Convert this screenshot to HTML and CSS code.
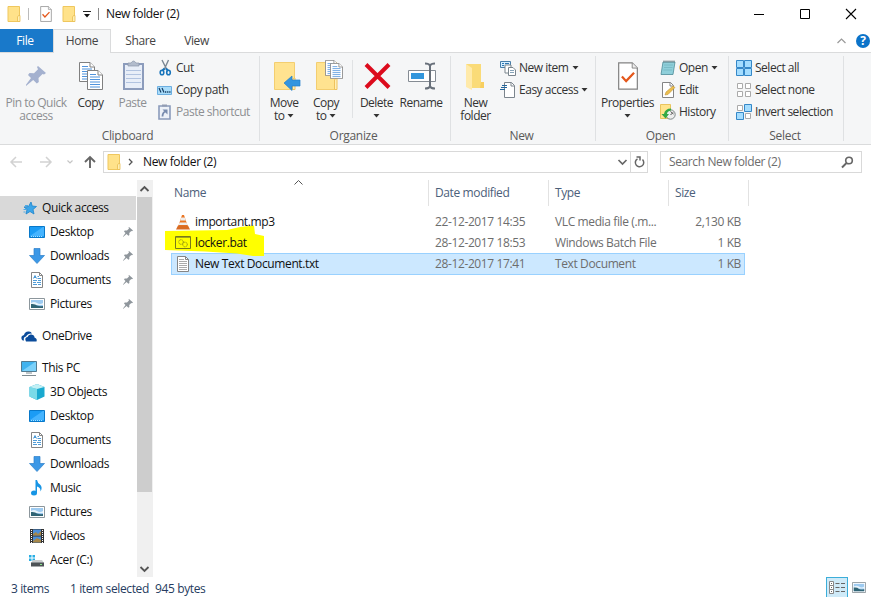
FILE: index.html
```html
<!DOCTYPE html>
<html lang="en">
<head>
  <meta charset="UTF-8">
  <title>New folder (2)</title>
  <link rel="stylesheet" href="styles.css">
</head>
<body>
  <!-- shared icons -->
  <svg class="sprite" width="0" height="0">
    <symbol id="folder" viewBox="0 0 14 16">
      <path d="M1 .5h11.500v15H1z" fill="#ffe28a" stroke="#efc75e"/>
      <path d="M10.500 15.500V11l1-1.500h1.500v6z" fill="#fff0b5" stroke="#e9bd50" stroke-width=".8"/>
    </symbol>
    <symbol id="check-page" viewBox="0 0 22 30">
      <path d="M1 1h14.500l5.500 5.500V29H1z" fill="#fff" stroke="#838383" stroke-width="1.300"/>
      <path d="M15.500 1v5.500H21" fill="#eee" stroke="#838383"/>
      <path d="M4.500 15.500l4.500 5 8.500-9" fill="none" stroke="#e4571b" stroke-width="2.400"/>
    </symbol>
    <symbol id="text-page" viewBox="0 0 16 20">
      <path d="M.5.5h10.500l4.500 4.500v14.500H.5z" fill="#fff" stroke="#808080"/>
      <path d="M11 .5V5h4.500" fill="#fff" stroke="#808080"/>
      <path d="M3 4.500h6M3 7h10M3 9.500h10M3 12h10M3 14.500h10M3 17h10" stroke="#4f93dc"/>
    </symbol>
    <symbol id="pin" viewBox="0 0 20 20">
      <path d="M12 0l8 7-2 1.500-1.500-.5-4 4 .3 4-2 1.500-3.600-3.500L0 20l-.5-.5L5 12 2 9l1.500-2 4.500.2 4-4L11 1z" fill="currentColor"/>
    </symbol>
    <symbol id="desktop" viewBox="0 0 16 12">
      <path d="M.5.5h15v11H.5z" fill="#1b9cf5" stroke="#0878c9"/>
      <path d="M1 10L14 1h1v9z" fill="#45b4ff"/>
      <path d="M2 10.500h12" stroke="#a8e0ff" stroke-dasharray="1 1"/>
    </symbol>
    <symbol id="download" viewBox="0 0 16 16">
      <path d="M5 .5h6v7h4.500L8 15.500.5 7.500H5z" fill="#3c98e6" stroke="#2c7fca" stroke-width=".7"/>
    </symbol>
    <symbol id="document" viewBox="0 0 12 16">
      <path d="M.5.5H8.500l3 3v12H.5z" fill="#fff" stroke="#858585"/>
      <path d="M8.500.5v3h3" fill="none" stroke="#858585"/>
      <path d="M2.500 6.500l1.500-3 1.500 3M3 5.500h2M6.500 4.500H8M6.500 6.500h3.500M2 8.500h4M7 8.500h3M2 10.500h3M6 10.500h4M2 12.500h4M7 12.500h3" fill="none" stroke="#3c91d3" stroke-width=".9"/>
    </symbol>
    <symbol id="picture" viewBox="0 0 16 12">
      <path d="M.5.5h15v11H.5z" fill="#fff" stroke="#8c969c"/>
      <path d="M2 2h12v8H2z" fill="#9dcaf0"/>
      <path d="M2 5q3-2 6 0t6 0v2H2z" fill="#e7f3fb"/>
      <path d="M2 6q4-.5 6 1.500 3 1 6 .5v2H2z" fill="#2f6475"/>
    </symbol>
    <symbol id="caret" viewBox="0 0 6 4"><path d="M0 0h6L3 3.500z" fill="#333"/></symbol>
  </svg>

  <div class="window">
    <div class="titlebar">
      <svg class="quick-folder" width="14" height="16"><use href="#folder"/></svg>
      <span class="bar"></span>
      <svg class="quick-check" width="12" height="16"><use href="#check-page"/></svg>
      <svg class="quick-folder2" width="14" height="16"><use href="#folder"/></svg>
      <svg class="quick-more" width="8" height="7" viewBox="0 0 8 7"><path d="M0 .5h8" stroke="#222"/><path d="M1 3h6L4 6.500z" fill="#111"/></svg>
      <span class="bar bar-dark"></span>
      <span class="window-title">New folder (2)</span>
      <div class="window-buttons">
        <svg width="10" height="10" viewBox="0 0 10 10"><path d="M0 5.500h10" stroke="#000"/></svg>
        <svg width="10" height="10" viewBox="0 0 10 10"><path d="M.5.5h9v9h-9z" fill="none" stroke="#000"/></svg>
        <svg width="10" height="10" viewBox="0 0 10 10"><path d="M0 0l10 10M10 0L0 10" stroke="#000" stroke-width="1.100"/></svg>
      </div>
    </div>

    <div class="tabs">
      <span class="tab tab-file">File</span>
      <span class="tab tab-home">Home</span>
      <span class="tab tab-share">Share</span>
      <span class="tab tab-view">View</span>
      <div class="tab-tools">
        <svg width="9" height="6" viewBox="0 0 9 6"><path d="M.5 5l4-4 4 4" fill="none" stroke="#999" stroke-width="1.200"/></svg>
        <span class="help">?</span>
      </div>
    </div>

    <div class="ribbon">
      <div class="group group-clipboard">
        <div class="tools">
          <div class="big big-pin disabled">
            <svg width="32" height="32" viewBox="0 0 32 32"><use href="#pin" x="6" y="6" width="20" height="20" color="#a4b1cf"/></svg>
            <span>Pin to Quick</span>
            <span>access</span>
          </div>
          <div class="big big-copy">
            <svg width="32" height="32" viewBox="0 0 32 32"><use href="#text-page" x="4" y="2" width="16" height="20"/><use href="#text-page" x="12" y="10" width="16" height="20"/></svg>
            <span>Copy</span>
          </div>
          <div class="big big-paste disabled">
            <svg width="32" height="32" viewBox="0 0 32 32">
              <path d="M7 4h19v25H7z" fill="#e8eef8" stroke="#8c9cbc" stroke-width="2"/>
              <path d="M11 6V3h3q2.500-4 5 0h3v3z" fill="#b2bccc" stroke="#8996a9" stroke-width=".7"/>
              <path d="M9 10.500h15M9 14.500h15M9 18.500h15M9 22.500h15" stroke="#b1c3e0"/>
            </svg>
            <span>Paste</span>
          </div>
          <div class="small-list">
            <div class="small">
              <svg width="16" height="16" viewBox="0 0 16 16"><path d="M5 0l5 10M11.500 0L7 10" stroke="#7a8794" stroke-width="1.400"/><path d="M7.500 8.500l-2 2M9 8.500l2 2" stroke="#1874bb" stroke-width="2"/><ellipse cx="5" cy="12.500" rx="1.800" ry="2.300" fill="none" stroke="#1874bb" stroke-width="1.600"/><ellipse cx="11.500" cy="12.500" rx="1.800" ry="2.300" fill="none" stroke="#1874bb" stroke-width="1.600"/></svg>
              <span>Cut</span>
            </div>
            <div class="small">
              <svg width="16" height="16" viewBox="0 0 16 16"><path d="M.5 4.500h14v8H.5z" fill="#a9dcfa" stroke="#6caee0"/><path d="M2 6l2 4.500M5 6l2 4.500" stroke="#163d63" stroke-width="1.200"/><path d="M8 10h6" stroke="#163d63" stroke-width="1.400" stroke-dasharray="1.300 .8"/></svg>
              <span>Copy path</span>
            </div>
            <div class="small disabled">
              <svg width="16" height="16" viewBox="0 0 16 16"><path d="M2 2h11v13H2z" fill="#edf1f8" stroke="#8b9bbb" stroke-width="1.600"/><path d="M5 .5h5v2H5z" fill="#929db3"/><path d="M5.500 12.500q0-4 3-5" fill="none" stroke="#788bae" stroke-width="1.800"/><path d="M5.500 5.500H10.500v5z" fill="#788bae"/></svg>
              <span>Paste shortcut</span>
            </div>
          </div>
        </div>
        <div class="group-name">Clipboard</div>
      </div>

      <div class="group group-organize">
        <div class="tools">
          <div class="big big-move">
            <svg width="32" height="32" viewBox="0 0 32 32"><path d="M6.500 2.500h20v27h-20z" fill="#ffe390" stroke="#f3ce70"/><path d="M24.500 29.500V20l1.500-2h1v11.500z" fill="#ffefb8" stroke="#efc25d"/><path d="M16 23l8-7v4h8v6h-8v4.500z" fill="#3395df" stroke="#2380ca" stroke-width=".7"/></svg>
            <span>Move</span>
            <span>to <svg class="caret" width="7" height="4"><use href="#caret"/></svg></span>
          </div>
          <div class="big big-copyto">
            <svg width="32" height="32" viewBox="0 0 32 32"><path d="M6.500 2.500h20v27h-20z" fill="#ffe390" stroke="#f3ce70"/><path d="M24.500 29.500V20l1.500-2h1v11.500z" fill="#ffefb8" stroke="#efc25d"/><use href="#text-page" x="15" y="0" width="13" height="16"/><use href="#text-page" x="20" y="3" width="13" height="16"/></svg>
            <span>Copy</span>
            <span>to <svg class="caret" width="7" height="4"><use href="#caret"/></svg></span>
          </div>
          <div class="tool-line"></div>
          <div class="big big-delete">
            <svg width="32" height="32" viewBox="0 0 32 32"><path d="M5 4.500l23 23M28 4.500l-23 23" stroke="#dc0b1d" stroke-width="4"/></svg>
            <span>Delete</span>
            <span><svg class="caret" width="7" height="4"><use href="#caret"/></svg></span>
          </div>
          <div class="big big-rename">
            <svg width="32" height="32" viewBox="0 0 32 32"><path d="M3.500 10.500h27v11h-27z" fill="#fff" stroke="#858c94"/><path d="M6 13h13v6H6z" fill="#3296dc"/><path d="M25 5v22M20 3.500q4 0 5 2 1-2 5-2M20 28.500q4 0 5-2 1 2 5 2" fill="none" stroke="#68707a" stroke-width="2"/></svg>
            <span>Rename</span>
          </div>
        </div>
        <div class="group-name">Organize</div>
      </div>

      <div class="group group-new">
        <div class="tools">
          <div class="big big-new">
            <svg width="32" height="32" viewBox="0 0 32 32"><path d="M6 4h15v18l3 1v5H10z" fill="#fadb78"/><path d="M6 4l6 4v22l-6-3z" fill="#ffeaaa"/><path d="M21 22h3v6h-4z" fill="#f8cf60"/></svg>
            <span>New</span>
            <span>folder</span>
          </div>
          <div class="small-list">
            <div class="small">
              <svg width="16" height="16" viewBox="0 0 16 16"><path d="M.5 1.500h10v6H.5z" fill="#d8efff" stroke="#477da8"/><path d="M2 3.500h2M5 3.500h4M2 5.500h2" stroke="#2c77b3"/><path d="M5 5h6v8H5z" fill="#fff" stroke="#7a858d"/><path d="M8.500 7.500h4.500l2.500 2.500v5.500h-7z" fill="#fff" stroke="#7a858d"/><path d="M10 10.500h4M10 12.500h4" stroke="#86a3b8"/></svg>
              <span>New item</span><svg class="caret" width="7" height="4"><use href="#caret"/></svg>
            </div>
            <div class="small">
              <svg width="16" height="16" viewBox="0 0 16 16"><path d="M4.500.5h7l3 3v12h-10z" fill="#fff" stroke="#7c858d"/><path d="M11 .5V4h3.500" fill="none" stroke="#7c858d"/><path d="M2 3.500h5M1 5.500h6M0 7.500h5" stroke="#24679d" stroke-width="1.200"/></svg>
              <span>Easy access</span><svg class="caret" width="7" height="4"><use href="#caret"/></svg>
            </div>
          </div>
        </div>
        <div class="group-name">New</div>
      </div>

      <div class="group group-open">
        <div class="tools">
          <div class="big big-properties">
            <svg width="32" height="32" viewBox="0 0 32 32"><use href="#check-page" x="5" y="2" width="22" height="28"/></svg>
            <span>Properties</span>
            <span><svg class="caret" width="7" height="4"><use href="#caret"/></svg></span>
          </div>
          <div class="small-list">
            <div class="small">
              <svg width="16" height="16" viewBox="0 0 16 16"><path d="M3 2h12l-2 12.500H1z" fill="#8fcfda" stroke="#4d8b98" stroke-width=".8"/><path d="M3.500 1.500h11" stroke="#65757a" stroke-width="2" stroke-dasharray="1 1"/><path d="M4 5h9M4 7.500h8.500M3.500 10h8.500" stroke="#70b1bd" stroke-width=".7"/></svg>
              <span>Open</span><svg class="caret" width="7" height="4"><use href="#caret"/></svg>
            </div>
            <div class="small">
              <svg width="16" height="16" viewBox="0 0 16 16"><path d="M2.500.5h8l3 3v12h-11z" fill="#fff" stroke="#858585"/><path d="M10 .5V4h3.500" fill="none" stroke="#858585"/><path d="M5 13l1-3 7-6 2 1.500-7 7z" fill="#ebbe4f" stroke="#b98d32" stroke-width=".5"/></svg>
              <span>Edit</span>
            </div>
            <div class="small">
              <svg width="16" height="16" viewBox="0 0 16 16"><path d="M.5.500h10v14H.5z" fill="#ffe48c" stroke="#e9c45e"/><circle cx="10.500" cy="10.500" r="4.700" fill="#eee" stroke="#7d8788"/><path d="M10.500 7.500l3 2.500M10.500 11l2.500-2.500" fill="none" stroke="#555"/><path d="M11 4.500q-6 0-7 5.500H1.500l4 4.500 3.500-4.500H7q0-3 4-3.500z" fill="#35a945"/></svg>
              <span>History</span>
            </div>
          </div>
        </div>
        <div class="group-name">Open</div>
      </div>

      <div class="group group-select">
        <div class="tools">
          <div class="small-list">
            <div class="small">
              <svg width="16" height="16" viewBox="0 0 16 16"><path d="M.5.5h7v7h-7zM8.500.5h7v7h-7zM.5 8.500h7v7h-7zM8.500 8.500h7v7h-7z" fill="#a4ddff" stroke="#3588c8"/></svg>
              <span>Select all</span>
            </div>
            <div class="small">
              <svg width="16" height="16" viewBox="0 0 16 16"><path d="M1.500 1.500h5v5h-5zM9.500 1.500h5v5h-5zM1.500 9.500h5v5h-5zM9.500 9.500h5v5h-5z" fill="#fff" stroke="#aaa"/></svg>
              <span>Select none</span>
            </div>
            <div class="small">
              <svg width="16" height="16" viewBox="0 0 16 16"><path d="M1.500 1.500h5v5h-5zM9.500 9.500h5v5h-5z" fill="#fff" stroke="#aaa"/><path d="M8.500.5h7v7h-7zM.5 8.500h7v7h-7z" fill="#a4ddff" stroke="#3588c8"/></svg>
              <span>Invert selection</span>
            </div>
          </div>
        </div>
        <div class="group-name">Select</div>
      </div>
    </div>

    <div class="navbar">
      <div class="arrows">
        <svg width="90" height="14" viewBox="0 0 90 14" fill="none">
          <path d="M12 7H1M6 2L1 7l5 5M30 7h11M36 2l5 5-5 5" stroke="#d2d2d2" stroke-width="1.500"/>
          <path d="M57.500 5.500L60 8l2.500-2.500" stroke="#c5c5c5" stroke-width="1.200"/>
          <path d="M80 13V2M75 7l5-5 5 5" stroke="#666" stroke-width="1.900"/>
        </svg>
      </div>
      <div class="address">
        <svg width="14" height="16"><use href="#folder"/></svg>
        <svg class="crumb" width="5" height="8" viewBox="0 0 5 8"><path d="M1 1l3 3-3 3" fill="none" stroke="#555" stroke-width="1.300"/></svg>
        <span>New folder (2)</span>
        <svg class="history" width="9" height="6" viewBox="0 0 9 6"><path d="M.5 1l4 4 4-4" fill="none" stroke="#666" stroke-width="1.700"/></svg>
        <div class="refresh">
          <svg width="11" height="12" viewBox="0 0 11 12"><path d="M8.500 3.500a4.200 4.200 0 1 1-5-.7M2.500 1H6v3.500" fill="none" stroke="#666" stroke-width="1.500"/></svg>
        </div>
      </div>
      <div class="search">
        <span>Search New folder (2)</span>
        <svg width="13" height="12" viewBox="0 0 13 12"><circle cx="8" cy="4.500" r="3.300" fill="none" stroke="#666" stroke-width="1.600"/><path d="M5.500 7L1 11.500" stroke="#666" stroke-width="2"/></svg>
      </div>
    </div>

    <div class="main">
      <div class="sidebar">
        <div class="side-item side-root side-active">
          <svg width="16" height="16" viewBox="0 0 16 16"><path d="M10 2l1.200 4 4.300.5-3.500 3 1 4.500-4-2.500L5 14l1-4.500L3 7l4.500-.5z" fill="#3ca5e8" stroke="#1b83cb" stroke-width=".8"/><path d="M4 5.500h3M2.500 9.500H5M2.500 12h2" stroke="#4cabe6"/></svg>
          <span>Quick access</span>
        </div>
        <div class="side-item"><svg width="16" height="12"><use href="#desktop"/></svg><span>Desktop</span><svg class="pinned" width="10" height="10"><use href="#pin"/></svg></div>
        <div class="side-item"><svg width="16" height="16"><use href="#download"/></svg><span>Downloads</span><svg class="pinned" width="10" height="10"><use href="#pin"/></svg></div>
        <div class="side-item"><svg width="16" height="16"><use href="#document"/></svg><span>Documents</span><svg class="pinned" width="10" height="10"><use href="#pin"/></svg></div>
        <div class="side-item"><svg width="16" height="12"><use href="#picture"/></svg><span>Pictures</span><svg class="pinned" width="10" height="10"><use href="#pin"/></svg></div>
        <div class="side-item side-root side-gap">
          <svg width="16" height="16" viewBox="0 0 16 16"><path d="M1 12q-2-4 2-5 1-4 5-3.500 2 0 3 2-4-.5-6 3-3 .5-2 4H2z" fill="#0b4c9b"/><path d="M5 13.500q-2-4 1.500-4.500 1-3 4-2.500 3 .5 3 3 3 1 2 4z" fill="#0b4c9b"/></svg>
          <span>OneDrive</span>
        </div>
        <div class="side-item side-root side-gap">
          <svg width="16" height="16" viewBox="0 0 16 16"><path d="M.5 1.500h15v10H.5z" fill="#40b3ef" stroke="#527b91"/><path d="M1 11L14 2h1v9z" fill="#7bd1fa"/><path d="M5 13h6M1 15.500h14" stroke="#7f8b91"/></svg>
          <span>This PC</span>
        </div>
        <div class="side-item"><svg width="16" height="16" viewBox="0 0 16 16"><path d="M8 0l7.500 3v9.500L8 16 .5 12.500V3z" fill="#19a9cf"/><path d="M.5 3L8 5v11L.5 12.500z" fill="#79dae8"/><path d="M.5 3L8 0l7.500 3L8 5z" fill="#c2f0f5"/></svg><span>3D Objects</span></div>
        <div class="side-item"><svg width="16" height="12"><use href="#desktop"/></svg><span>Desktop</span></div>
        <div class="side-item"><svg width="16" height="16"><use href="#document"/></svg><span>Documents</span></div>
        <div class="side-item"><svg width="16" height="16"><use href="#download"/></svg><span>Downloads</span></div>
        <div class="side-item"><svg width="16" height="16" viewBox="0 0 16 16"><ellipse cx="5" cy="13" rx="3" ry="2.500" fill="#1795e5"/><path d="M6.500 0H8q.5 3 3 4.500 3 3 .5 7 .3-4-3.500-5v6.500H6.500z" fill="#1795e5"/></svg><span>Music</span></div>
        <div class="side-item"><svg width="16" height="12"><use href="#picture"/></svg><span>Pictures</span></div>
        <div class="side-item"><svg width="16" height="16" viewBox="0 0 16 16"><path d="M1 1h14v14H1z" fill="#333"/><path d="M4 1.500h8v6H4zM4 8.500h8v6H4z" fill="#4b8fdb"/><path d="M4 6l3-2 2 2 3-3v4.500H4zM4 13l4-3 4 2v2.500H4z" fill="#a7884a"/><path d="M2.500 2v13M13.500 2v13" stroke="#fff" stroke-dasharray="1 1"/></svg><span>Videos</span></div>
        <div class="side-item"><svg width="16" height="16" viewBox="0 0 16 16"><path d="M0 3h2.500v2.500H0zM3.500 3H6v2.500H3.500zM0 6.500h2.500V9H0zM3.500 6.500H6V9H3.500z" fill="#28aee4"/><path d="M4 8h9l2 3H2z" fill="#c9cdcf"/><path d="M2 10.500h13v4H2z" fill="#4d5356"/><path d="M11 12.500h2" stroke="#8ce68c"/></svg><span>Acer (C:)</span></div>
      </div>

      <div class="scrollbar">
        <div class="scroll-button"><svg width="9" height="6" viewBox="0 0 9 6"><path d="M.5 5l4-4 4 4" fill="none" stroke="#555" stroke-width="1.800"/></svg></div>
        <div class="scroll-thumb"></div>
        <div class="scroll-button scroll-down"><svg width="9" height="6" viewBox="0 0 9 6"><path d="M.5 1l4 4 4-4" fill="none" stroke="#555" stroke-width="1.800"/></svg></div>
      </div>

      <div class="files">
        <div class="columns">
          <span class="col-name">Name</span>
          <span>Date modified</span>
          <span>Type</span>
          <span class="col-size">Size</span>
          <svg class="sort" width="9" height="5" viewBox="0 0 9 5"><path d="M.5 4.500l4-4 4 4" fill="none" stroke="#555"/></svg>
        </div>
        <div class="rows">
          <svg class="marker" width="100" height="32" viewBox="0 0 100 32"><path d="M0 6l62-1 13-3 14-1.500 1 8.500 9 2v20H88l-16-2.500-32-2L0 25z" fill="#ff0"/></svg>
          <div class="row">
            <svg width="14" height="16" viewBox="0 0 14 16"><path d="M6 1h2l4 12H2z" fill="#eb7623"/><path d="M5.200 3.500h3.600l1 3H4.200zM3.500 8.500h7l.9 2.500H2.600z" fill="#eee"/><path d="M2 11.500h10l2 4H0z" fill="#d96b22"/></svg>
            <span>important.mp3</span><span>22-12-2017 14:35</span><span>VLC media file (.m...</span><span class="size">2,130 KB</span>
          </div>
          <div class="row">
            <svg width="16" height="13" viewBox="0 0 16 13" fill="none"><path d="M.5.5h15v12H.5z" stroke="#77791b"/><path d="M1 1.500h14" stroke="#a5a71b"/><circle cx="6" cy="6" r="2.300" stroke="#8b8d16" stroke-dasharray="1 .5"/><circle cx="10" cy="8.500" r="2.300" stroke="#8b8d16" stroke-dasharray="1 .5"/></svg>
            <span>locker.bat</span><span>28-12-2017 18:53</span><span>Windows Batch File</span><span class="size">1 KB</span>
          </div>
          <div class="row selected">
            <svg width="12" height="16" viewBox="0 0 12 16"><path d="M.5.5h8l3 3v12H.5z" fill="#fff" stroke="#858585"/><path d="M8.500.5v3h3" fill="none" stroke="#858585"/><path d="M2 3.500h5M2 5.500h8M2 7.500h8M2 9.500h8M2 11.500h8M2 13.500h8" stroke="#aaa"/></svg>
            <span>New Text Document.txt</span><span>28-12-2017 17:41</span><span>Text Document</span><span class="size">1 KB</span>
          </div>
        </div>
      </div>
    </div>

    <div class="statusbar">
      <span class="status-count">3 items</span>
      <span class="status-selected">1 item selected</span>
      <span>945 bytes</span>
      <div class="view-buttons">
        <div class="view-details"><svg width="16" height="14" viewBox="0 0 16 14"><path d="M.5.5h4v4h-4zM.5 4.500h4v4h-4zM.5 8.500h4v4h-4z" fill="#fff" stroke="#888"/><path d="M2 2.500h1M2 6.500h1M2 10.500h1M6.500 2.500h4M12 2.500h4M6.500 6.500h4M12 6.500h4M6.500 10.500h4M12 10.500h4" stroke="#666"/></svg></div>
        <svg class="view-large" width="14" height="11" viewBox="0 0 16 12" preserveAspectRatio="none"><use href="#picture" width="16" height="12"/></svg>
      </div>
    </div>
  </div>
</body>
</html>
```
FILE: styles.css
```css
* {
  box-sizing: border-box;
}

body {
  margin: 0;
  background: #fff;
  color: #111;
  font-family: "Open Sans", "Noto Sans", sans-serif;
  font-size: 12px;
  letter-spacing: -0.38px;
  line-height: 16px;
}

svg {
  display: block;
  flex: none;
  overflow: visible;
}

span {
  white-space: nowrap;
}

.sprite {
  position: absolute;
}

.window {
  display: flex;
  flex-direction: column;
  width: 871px;
  height: 597px;
  overflow: hidden;
}

/* title bar */
.titlebar {
  display: flex;
  align-items: center;
  height: 29px;
  padding: 0 15px 2px 7px;
}

.bar {
  width: 1px;
  height: 12px;
  margin-left: 7px;
  background: #bbb;
}

.bar-dark {
  margin-left: 7px;
  background: #888;
}

.quick-check {
  margin-left: 11px;
}

.quick-folder2 {
  margin-left: 10px;
}

.quick-more {
  margin: 2px 0 0 7px;
}

.window-title {
  margin-left: 7px;
}

.window-buttons {
  display: flex;
  gap: 36px;
  margin-left: auto;
}

/* tabs */
.tabs {
  display: flex;
  height: 23px;
  line-height: 24px;
  color: #444;
}

.tab {
  text-align: center;
}

.tab-file {
  width: 53px;
  padding-right: 3px;
  background: #1979ca;
  color: #fff;
}

.tab-home {
  width: 58px;
  height: 24px;
  z-index: 1;
  background: #f5f6f7;
  border: 1px solid #dadbdc;
  border-bottom: none;
  line-height: 22px;
}

.tab-share {
  width: 59px;
}

.tab-view {
  width: 53px;
}

.tab-tools {
  display: flex;
  align-items: center;
  gap: 10px;
  margin-left: auto;
}

.help {
  width: 14px;
  height: 14px;
  margin-right: 1px;
  border-radius: 50%;
  background: #0b73c9;
  color: #fff;
  font-weight: bold;
  line-height: 14px;
  text-align: center;
}

/* ribbon */
.ribbon {
  display: flex;
  height: 93px;
  padding: 3px 0;
  background: #f5f6f7;
  border-top: 1px solid #dadbdc;
  border-bottom: 1px solid #dadbdc;
  color: #333;
  letter-spacing: -0.5px;
}

.group {
  display: flex;
  flex-direction: column;
  border-right: 1px solid #dfe1e3;
}

.tools {
  display: flex;
  flex: none;
  height: 71px;
}

.group-name {
  color: #5a5a5a;
  line-height: 17px;
  letter-spacing: -0.3px;
  text-align: center;
}

.group-clipboard {
  width: 260px;
}

.group-clipboard .group-name {
  padding-right: 4px;
}

.group-organize {
  width: 191px;
  padding-left: 2px;
}

.group-organize .group-name {
  padding-right: 5px;
}

.group-new {
  width: 145px;
}

.group-new .group-name,
.group-open .group-name {
  padding-right: 3px;
}

.group-open {
  width: 133px;
}

.group-select {
  width: 115px;
}

.group-select .group-name {
  padding-right: 2px;
}

.big {
  display: flex;
  flex-direction: column;
  align-items: center;
  padding-top: 4px;
  line-height: 13px;
}

.big svg + span {
  margin-top: 4px;
}

.big .caret {
  display: inline-block;
  vertical-align: 2px;
}

.disabled {
  color: #8d8f92;
}

.big-pin {
  width: 72px;
}

.big-copy {
  width: 37px;
}

.big-paste {
  width: 47px;
  margin-right: 1px;
}

.big-move {
  width: 44px;
}

.big-copyto {
  width: 40px;
}

.tool-line {
  width: 1px;
  height: 58px;
  margin: 4px 3px 0 6px;
  background: #e0e2e4;
}

.big-delete {
  width: 41px;
}

.big-rename {
  width: 48px;
}

.big-new {
  width: 49px;
}

.big-properties {
  width: 55px;
  margin-left: 4px;
}

.small-list {
  padding-top: 1px;
}

.group-open .small-list {
  margin-left: 5px;
}

.group-select .small-list {
  margin-left: 7px;
}

.small {
  display: flex;
  align-items: center;
  gap: 3px;
  height: 22px;
  letter-spacing: -0.48px;
}

/* navigation */
.navbar {
  display: flex;
  align-items: center;
  height: 35px;
  padding: 0 9px 2px 10px;
}

.address,
.search {
  display: flex;
  align-items: center;
  height: 22px;
  border: 1px solid #d9d9d9;
}

.address {
  width: 545px;
  margin-left: 3px;
  padding-left: 3px;
}

.crumb {
  margin: 0 10px 0 7px;
}

.history {
  margin-left: auto;
}

.refresh {
  display: flex;
  align-items: center;
  justify-content: center;
  width: 17px;
  height: 20px;
  margin-left: 3px;
  border-left: 1px solid #d9d9d9;
}

.search {
  justify-content: space-between;
  width: 202px;
  margin-left: auto;
  padding: 0 7px 0 8px;
  color: #6d6d6d;
}

/* folder tree */
.main {
  display: flex;
  height: 397px;
}

.sidebar {
  width: 137px;
  padding-top: 16px;
}

.side-item {
  display: flex;
  align-items: center;
  gap: 5px;
  width: 136px;
  height: 24px;
  padding: 0 3px 0 29px;
}

.side-root {
  padding-left: 21px;
}

.side-active {
  background: #d9d9d9;
}

.side-gap {
  margin-top: 8px;
}

.pinned {
  margin-left: auto;
  color: #8f969c;
}

.scrollbar {
  display: flex;
  flex-direction: column;
  width: 16px;
  background: #f0f0f0;
}

.scroll-button {
  display: flex;
  align-items: center;
  justify-content: center;
  height: 17px;
  padding-right: 2px;
}

.scroll-thumb {
  height: 295px;
  margin-right: 1px;
  background: #cdcdcd;
}

.scroll-down {
  margin-top: auto;
}

/* file list */
.files {
  width: 574px;
  margin-left: 18px;
}

.columns {
  position: relative;
  display: grid;
  grid-template-columns: 258px 120px 120px 80px;
  height: 25px;
  color: #4c607a;
  line-height: 26px;
}

.columns span {
  padding-left: 6px;
  border-right: 1px solid #e2e2e2;
}

.columns .col-name {
  padding-left: 3px;
}

.sort {
  position: absolute;
  left: 123px;
  top: 0;
}

.rows {
  position: relative;
  padding-top: 6px;
}

.marker {
  position: absolute;
  left: -6px;
  top: 20px;
  z-index: 1;
}

.row {
  display: grid;
  grid-template-columns: 24px 240px 120px 107px 79px;
  align-items: center;
  height: 21px;
  color: #6d6d6d;
}

.row > * {
  position: relative;
  z-index: 2;
}

.row svg {
  justify-self: center;
}

.row svg + span {
  color: #111;
}

.size {
  text-align: right;
}

.selected {
  height: 22px;
  background: #cce8ff;
  box-shadow: inset 0 0 0 1px #99d1ff;
}

/* status bar */
.statusbar {
  display: flex;
  height: 20px;
  padding-left: 11px;
  color: #263c60;
  line-height: 24px;
}

.status-count {
  width: 59px;
}

.status-selected {
  width: 85px;
}

.view-buttons {
  display: flex;
  gap: 4px;
  margin-left: auto;
  padding-right: 5px;
}

.view-details {
  display: flex;
  align-items: center;
  justify-content: center;
  width: 22px;
  height: 22px;
  background: #cfeaf8;
  border: 1px solid #3caed9;
}

.view-large {
  margin-top: 5px;
}
```
